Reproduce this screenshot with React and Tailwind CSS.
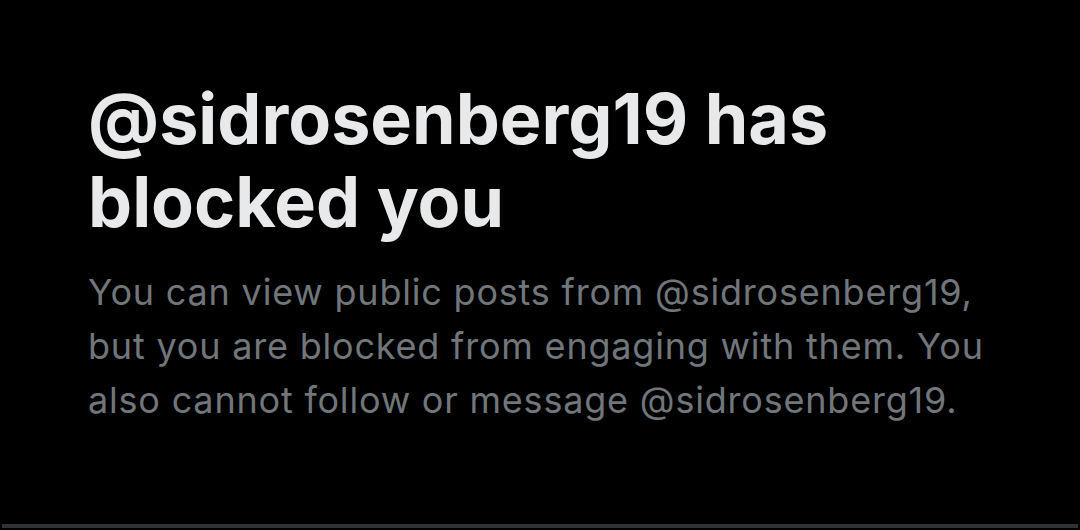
export default function App() {
  return (
    <div className="w-[1080px] h-[530px] bg-black flex flex-col" style={{ fontFamily: "Inter, 'Noto Sans', sans-serif" }}>
      <div className="flex-1 pl-[88px] pr-[40px] pt-[77px]">
        <h1 className="text-[70px] leading-[83px] font-bold text-[#e7e9ea]">
          @sidrosenberg19 has
          <br />
          blocked you
        </h1>
        <p className="mt-[22px] text-[36px] leading-[54px] text-[#71767b] tracking-[0.8px]">
          You can view public posts from @sidrosenberg19,
          <br />
          but you are blocked from engaging with them. You
          <br />
          also cannot follow or message @sidrosenberg19.
        </p>
      </div>
      <div className="mx-[2px] mb-[2px] h-[4px] bg-[#2f3336]" />
    </div>
  );
}
